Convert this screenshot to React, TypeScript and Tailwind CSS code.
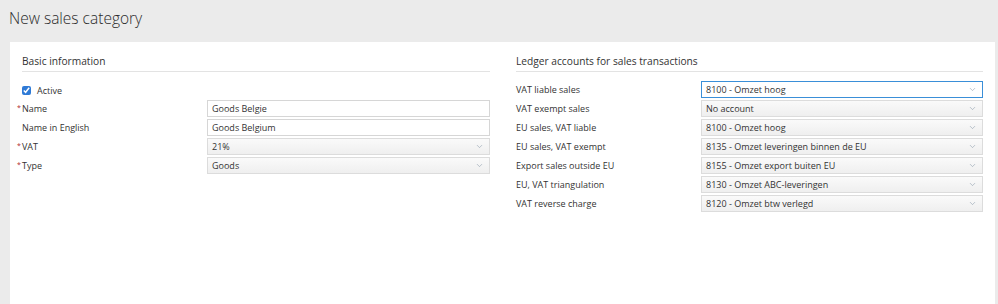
import { ChevronDown } from "lucide-react";

const ledger: [string, string][] = [
  ["VAT liable sales", "8100 - Omzet hoog"],
  ["VAT exempt sales", "No account"],
  ["EU sales, VAT liable", "8100 - Omzet hoog"],
  ["EU sales, VAT exempt", "8135 - Omzet leveringen binnen de EU"],
  ["Export sales outside EU", "8155 - Omzet export buiten EU"],
  ["EU, VAT triangulation", "8130 - Omzet ABC-leveringen"],
  ["VAT reverse charge", "8120 - Omzet btw verlegd"],
];

function Label({ text, required }: { text: string; required?: boolean }) {
  return (
    <div className="relative w-[185px] shrink-0 text-[9px] text-[#333]">
      {required && (
        <span className="absolute -left-[5px] top-[1px] text-[7px] text-[#b02a2a]">*</span>
      )}
      {text}
    </div>
  );
}

function TextBox({ value }: { value: string }) {
  return (
    <div className="flex h-[17px] flex-1 items-center border border-[#d6d6d6] bg-white px-[4px] text-[9px] text-[#333]">
      {value}
    </div>
  );
}

function Select({ value, focused }: { value: string; focused?: boolean }) {
  return (
    <div
      className={
        focused
          ? "flex h-[17px] flex-1 items-center justify-between border border-[#3a8fd8] bg-white px-[4px] text-[9px] text-[#333]"
          : "flex h-[17px] flex-1 items-center justify-between border border-[#dcdcdc] bg-gradient-to-b from-[#fafafa] to-[#efefef] px-[4px] text-[9px] text-[#333]"
      }
    >
      <span>{value}</span>
      <ChevronDown size={9} strokeWidth={1.5} className="mr-[1px] text-[#8a9aaa]" />
    </div>
  );
}

export default function App() {
  return (
    <div className="flex h-[304px] w-[998px] flex-col bg-[#ebebeb] font-['Open_Sans',sans-serif]">
      <h1 className="h-[42px] pl-[9px] pt-[7px] text-[15.5px] font-light leading-[22px] text-[#2a2a2a]">
        New sales category
      </h1>
      <div className="ml-[10px] mr-[3px] flex flex-1 gap-[26px] bg-white px-[12px] pt-[12px]">
        <section className="w-[468px]">
          <h2 className="border-b border-[#e3e3e3] pb-[2px] text-[10.2px] leading-[15px] text-[#333]">
            Basic information
          </h2>
          <div className="mt-[11px] flex flex-col gap-[2px]">
            <label className="flex h-[15px] items-center gap-[6px] text-[9px] text-[#333]">
              <input type="checkbox" defaultChecked className="m-0 h-[9px] w-[9px] accent-[#2f7ad6]" />
              Active
            </label>
            <div className="flex items-center">
              <Label text="Name" required />
              <TextBox value="Goods Belgie" />
            </div>
            <div className="flex items-center">
              <Label text="Name in English" />
              <TextBox value="Goods Belgium" />
            </div>
            <div className="flex items-center">
              <Label text="VAT" required />
              <Select value="21%" />
            </div>
            <div className="flex items-center">
              <Label text="Type" required />
              <Select value="Goods" />
            </div>
          </div>
        </section>
        <section className="w-[467px]">
          <h2 className="border-b border-[#e3e3e3] pb-[2px] text-[10.2px] leading-[15px] text-[#333]">
            Ledger accounts for sales transactions
          </h2>
          <div className="mt-[9px] flex flex-col gap-[2px]">
            {ledger.map(([label, value], i) => (
              <div key={label} className="flex items-center">
                <Label text={label} />
                <Select value={value} focused={i === 0} />
              </div>
            ))}
          </div>
        </section>
      </div>
    </div>
  );
}
